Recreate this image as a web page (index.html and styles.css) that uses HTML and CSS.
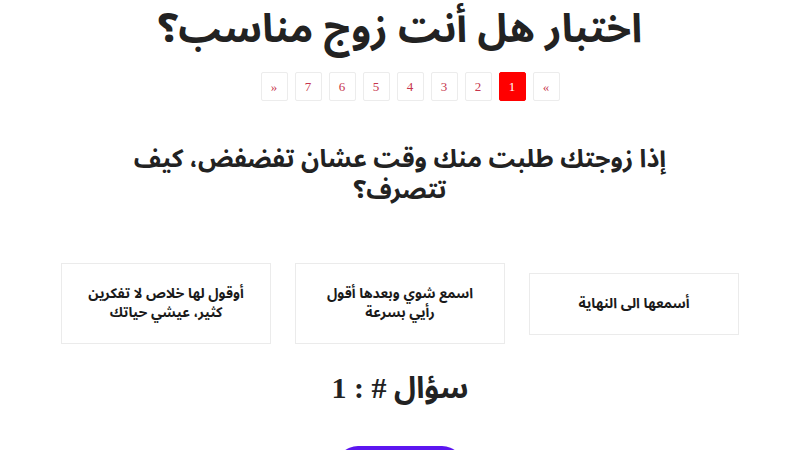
FILE: index.html
```html
<!DOCTYPE html>
<html lang="ar" dir="rtl">
<head>
<meta charset="utf-8">
<link rel="stylesheet" href="styles.css">
</head>
<body>
<main class="quiz">
  <h1 class="title">اختبار هل أنت زوج مناسب؟</h1>
  <ul class="pager">
    <li class="page">»</li>
    <li class="page active">1</li>
    <li class="page">2</li>
    <li class="page">3</li>
    <li class="page">4</li>
    <li class="page">5</li>
    <li class="page">6</li>
    <li class="page">7</li>
    <li class="page">«</li>
  </ul>
  <h2 class="question">إذا زوجتك طلبت منك وقت عشان تفضفض، كيف تتصرف؟</h2>
  <div class="options">
    <div class="option">أسمعها الى النهاية</div>
    <div class="option">اسمع شوي وبعدها أقول رأيي بسرعة</div>
    <div class="option">أوقول لها خلاص لا تفكرين كثير، عيشي حياتك</div>
  </div>
  <div class="qnum"><span class="ar">سؤال</span> # : 1</div>
  <button class="next">التالي</button>
</main>
</body>
</html>
```
FILE: styles.css
```css
html, body {
  margin: 0;
  padding: 0;
  background: #fff;
}
body {
  font-family: "Liberation Serif", serif;
  color: #222;
}
.quiz {
  height: 450px;
  overflow: hidden;
  display: flex;
  flex-direction: column;
  align-items: center;
  text-align: center;
}
.title {
  font-family: "Noto Sans Arabic", "DejaVu Sans", sans-serif;
  font-size: 40px;
  font-weight: 700;
  line-height: 60px;
  margin: 0 0 12px;
  color: #222;
}
.pager {
  list-style: none;
  display: flex;
  gap: 7px;
  margin: 0;
  padding: 0 0 0 20px;
}
.page {
  width: 25px;
  height: 27px;
  border: 1px solid #ececec;
  border-radius: 2px;
  color: #c7354d;
  font-size: 13px;
  line-height: 27px;
  text-align: center;
}
.page.active {
  background: #ff0000;
  border-color: #ff0000;
  color: #fff;
}
.question {
  font-family: "Noto Sans Arabic", "DejaVu Sans", sans-serif;
  font-size: 25px;
  font-weight: 700;
  line-height: 31px;
  width: 560px;
  margin: 43px 0 0;
  color: #222;
}
.options {
  display: flex;
  align-items: center;
  gap: 24px;
  margin-top: 57px;
}
.option {
  width: 170px;
  border: 1px solid #ebebeb;
  padding: 20px 19px 21px;
  font-family: "Noto Sans Arabic", "DejaVu Sans", sans-serif;
  font-size: 14px;
  font-weight: 700;
  line-height: 19px;
  color: #1a1a1a;
}
.qnum {
  font-family: "Liberation Serif", serif;
  font-size: 30px;
  font-weight: 700;
  margin-top: 23px;
  line-height: 42px;
}
.qnum .ar {
  font-family: "Noto Sans Arabic", "DejaVu Sans", sans-serif;
}
.next {
  margin-top: 36px;
  flex: none;
  width: 128px;
  height: 44px;
  border: none;
  border-radius: 22px;
  background: #5c16f0;
  color: #fff;
  font-size: 16px;
}
```
